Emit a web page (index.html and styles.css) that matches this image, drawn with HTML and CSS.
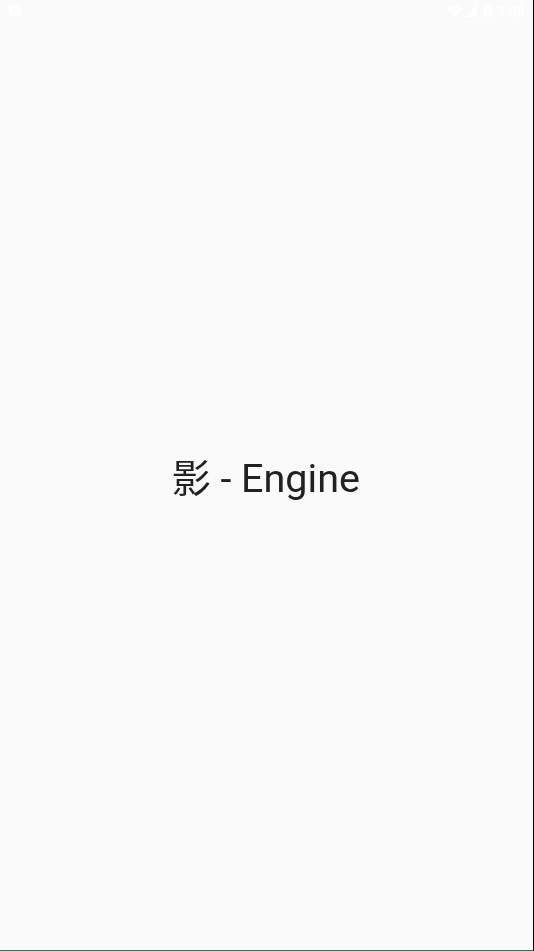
FILE: index.html
```html
<!DOCTYPE html>
<html lang="ja">
<head>
<meta charset="utf-8">
<title>影 - Engine</title>
<link rel="stylesheet" href="styles.css">
</head>
<body>
<div class="screen">
  <header class="status">
    <svg class="app" width="12" height="11" viewBox="0 0 12 11"><path fill="#fff" fill-rule="evenodd" d="M1 0h10l1 1v9l-1 1H1l-1-1V1zM5.4 2.5 3.2 8.5h1l.5-1.5h2.6l.5 1.5h1L6.6 2.5zM6 3.6l1 2.6H5z"/></svg>
    <svg class="wifi" width="16" height="12" viewBox="0 0 16 12"><path fill="#fff" d="M0 3Q8-3 16 3L8 12z"/></svg>
    <svg class="signal" width="12" height="12" viewBox="0 0 12 12"><path fill="#fff" d="M12 0v12H0z"/></svg>
    <svg class="battery" width="8" height="13" viewBox="0 0 8 13"><path fill="#fff" fill-rule="evenodd" d="M2.5 0h3v1.3H8V13H0V1.3h2.5zM4.5 3 2 7.5h1.5V11L6 6.5H4.5z"/></svg>
    <span class="time">7:08</span>
  </header>
  <main class="content"><h1 class="title"><span class="kanji">影</span> - Engine</h1></main>
</div>
</body>
</html>
```
FILE: styles.css
```css
* { box-sizing: border-box; }
body { margin: 0; background: #fafafa; }
.screen {
  display: flex;
  flex-direction: column;
  height: 951px;
  border-right: 1px solid #000;
  border-bottom: 1px solid #426b60;
  font-family: Roboto, "Noto Sans CJK JP", sans-serif;
}
.status {
  display: flex;
  align-items: center;
  height: 21px;
  padding: 0 8px 0 9px;
  color: #fff;
}
.wifi { margin-left: auto; }
.signal { margin-left: 2px; }
.battery { margin-left: 7px; }
.time { margin-left: 5px; padding-top: 2px; font-size: 14px; font-weight: 500; line-height: 20px; }
.content {
  flex: 1;
  display: flex;
  align-items: center;
  justify-content: center;
  padding: 0 1px 14px 0;
}
.title {
  margin: 0;
  color: #212121;
  font-size: 39.5px;
  font-weight: 400;
  line-height: 48px;
  will-change: transform;
}
.kanji { font-size: 38.6px; }
```
